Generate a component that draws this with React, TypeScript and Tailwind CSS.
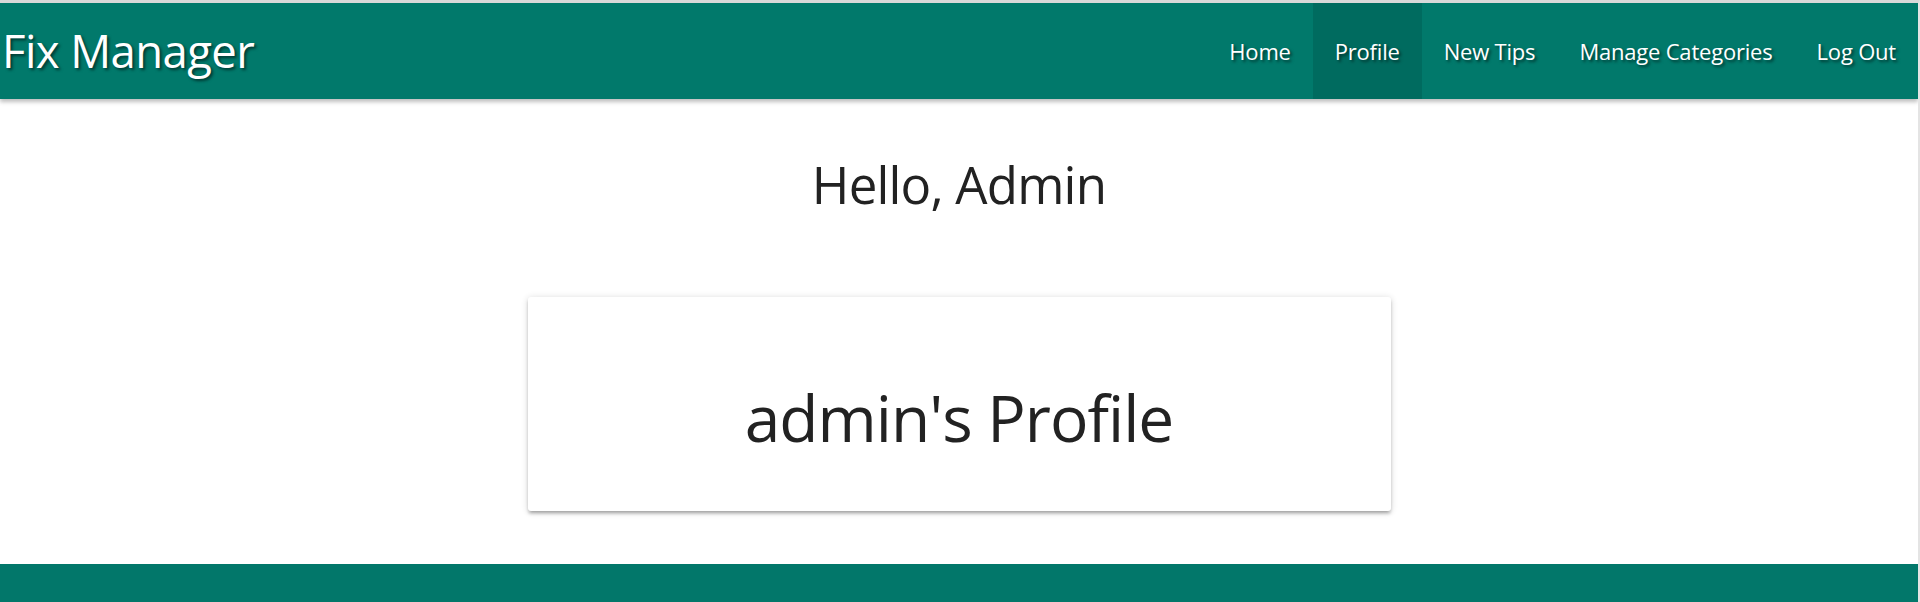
import React from 'react';

const links = ['Home', 'Profile', 'New Tips', 'Manage Categories', 'Log Out'];

const App: React.FC = () => {
    return (
        <div className="w-full h-[602px] flex flex-col bg-white border-t-[3px] border-t-[#d9d9d9] border-r-2 border-r-[#e4e4e4] overflow-hidden font-['Open_Sans','Noto_Sans',sans-serif]">
            <nav className="h-[96px] shrink-0 bg-[#01796b] flex items-center justify-between shadow-[0_3px_4px_rgba(0,0,0,0.25)] relative z-10">
                <div className="pl-[2px] text-white text-[45.5px] leading-none [text-shadow:2px_2px_3px_rgba(0,0,0,0.55)] tracking-[-0.6px]">
                    Fix Manager
                </div>
                <ul className="flex h-full">
                    {links.map((link) => (
                        <li
                            key={link}
                            className={`h-full flex items-center px-[22px] text-white text-[22px] tracking-[-0.2px] [text-shadow:2px_2px_3px_rgba(0,0,0,0.55)] ${link === 'Profile' ? 'bg-[#006b5f]' : ''}`}
                        >
                            {link}
                        </li>
                    ))}
                </ul>
            </nav>
            <main className="flex-1 flex flex-col items-center">
                <h4 className="mt-[55px] text-[51px] leading-[1.2] text-[#222222] font-normal tracking-[-0.8px]">Hello, Admin</h4>
                <div className="mt-[82px] w-[863px] h-[214px] bg-white rounded-[3px] shadow-[0_3px_3px_rgba(0,0,0,0.18),0_4px_2px_-3px_rgba(0,0,0,0.14),0_1px_7px_rgba(0,0,0,0.16)] flex items-center justify-center">
                    <div className="mt-[28px] text-[64px] leading-[1.2] text-[#222222] font-normal tracking-[-1px]">admin's Profile</div>
                </div>
            </main>
            <footer className="h-[38px] shrink-0 bg-[#02776a]"></footer>
        </div>
    );
};

export default App;
